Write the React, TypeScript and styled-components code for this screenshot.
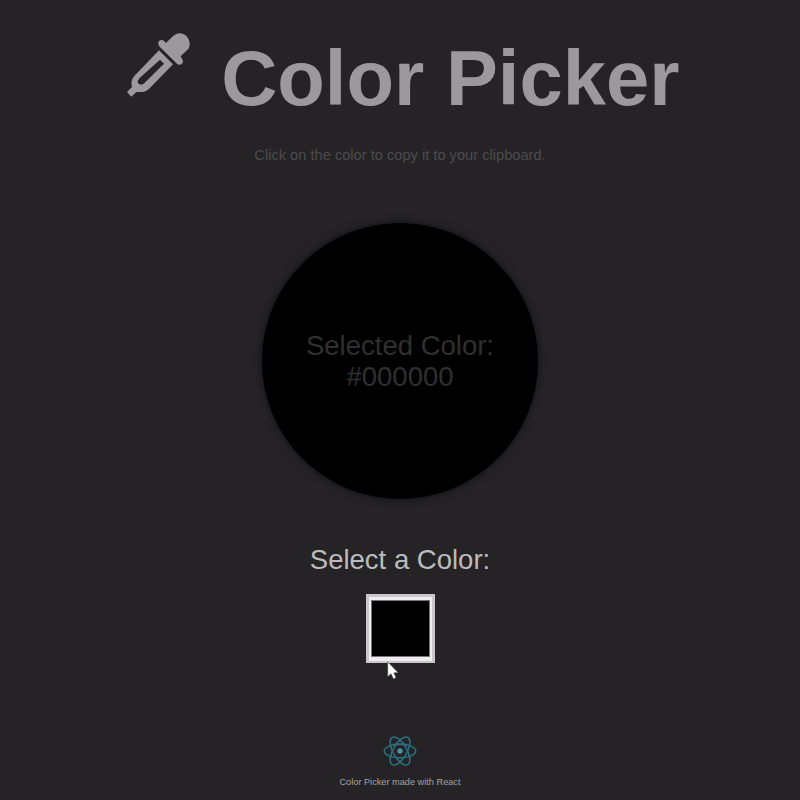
import React, { useState } from "react";
import styled, { createGlobalStyle } from "styled-components";

const GlobalStyle = createGlobalStyle`
  *, *::before, *::after { box-sizing: border-box; }
  body {
    margin: 0;
    background: #252326;
    font-family: "Liberation Sans", Arial, sans-serif;
  }
`;

const Page = styled.main`
  display: flex;
  flex-direction: column;
  align-items: center;
  height: 800px;
  overflow: hidden;
  background: #252326;
`;

const Header = styled.header`
  display: flex;
  align-items: flex-start;
  width: 556px;
  height: 90px;
  margin-top: 32px;
  margin-left: 6px;
`;

const DropperIcon = styled.svg`
  flex: none;
  width: 66.67px;
  height: 66.67px;
  margin-right: 29.5px;
  fill: #9b999c;
`;

const Title = styled.h1`
  margin: 1px 0 0;
  font-size: 77.8px;
  line-height: 90px;
  font-weight: 700;
  white-space: nowrap;
  color: #9b999c;
`;

const Hint = styled.p`
  margin: 25px 0 0;
  font-size: 14.65px;
  line-height: 17px;
  color: #4d4c4d;
`;

const Swatch = styled.button<{ $color: string }>`
  display: flex;
  align-items: center;
  justify-content: center;
  width: 276px;
  height: 276px;
  margin-top: 59px;
  padding: 0;
  border: 0;
  border-radius: 50%;
  background: ${(p) => p.$color};
  box-shadow: 0 0 9px rgba(0, 0, 0, 0.6);
  font: 27.5px/31px "Liberation Sans", Arial, sans-serif;
  color: #303030;
`;

const Label = styled.label`
  margin-top: 45px;
  font-size: 27.5px;
  line-height: 32px;
  color: #bdbcbd;
`;

const PickerSlot = styled.div`
  position: relative;
  width: 69px;
  height: 69px;
  margin-top: 18px;
`;

const Picker = styled.button`
  display: block;
  width: 69px;
  height: 69px;
  padding: 3px 2px 4px;
  border: 3px solid #c9c7ca;
  border-bottom-width: 2px;
  border-radius: 0;
  background: #efedef;
`;

const PickerFill = styled.span<{ $color: string }>`
  display: block;
  height: 100%;
  border: 1px solid #77757a;
  background: ${(p) => p.$color};
`;

const Cursor = styled.svg`
  position: absolute;
  left: 21px;
  top: 67px;
  width: 12px;
  height: 19px;
`;

const Footer = styled.footer`
  display: flex;
  flex-direction: column;
  align-items: center;
  margin-top: 69.5px;
  font-size: 9.2px;
  line-height: 11px;
  color: #a4a2a5;
`;

const ReactLogo = styled.svg`
  width: 36px;
  height: 36px;
  margin-bottom: 8px;
  fill: none;
  stroke: #2b6f80;
`;

export default function App() {
  const [color] = useState("#000000");
  return (
    <Page>
      <GlobalStyle />
      <Header>
        <DropperIcon viewBox="45 35 200 200" aria-hidden="true">
          <path
            fillRule="evenodd"
            d="M147 90 L189 132 L119 204 Q108 216 93 215 L79 215 L64 229 L51 215 L66 200 L64 188 Q64 176 73 167 Z M150 118 L88 174 Q81 182 84 188 Q89 196 101 190 L162 130 Z"
          />
          <path d="M148 61 Q157 56 163 63 L168 68 L190 46 Q208 33 226 44 Q243 59 238 79 Q236 86 231 90 L212 108 L216 115 Q222 123 216 130 Q209 136 201 130 L149 79 Q141 69 148 61 Z" />
        </DropperIcon>
        <Title>Color Picker</Title>
      </Header>
      <Hint>Click on the color to copy it to your clipboard.</Hint>
      <Swatch $color={color}>
        <span>
          Selected Color:
          <br />
          {color}
        </span>
      </Swatch>
      <Label htmlFor="picker">Select a Color:</Label>
      <PickerSlot>
        <Picker id="picker" aria-label="Choose color">
          <PickerFill $color={color} />
        </Picker>
        <Cursor viewBox="0 0 12 19" aria-hidden="true">
          <path
            d="M.7 .8 V15.8 L4 12.8 L6.4 18 L9 16.8 L6.9 11.8 H11.3 Z"
            fill="#fff"
            stroke="#333"
            strokeWidth=".5"
          />
        </Cursor>
      </PickerSlot>
      <Footer>
        <ReactLogo viewBox="-18 -18 36 36" aria-hidden="true">
          <ellipse rx="15.7" ry="6.9" strokeWidth="1.6" />
          <ellipse rx="15.7" ry="6.9" strokeWidth="1.6" transform="rotate(60)" />
          <ellipse rx="15.7" ry="6.9" strokeWidth="1.6" transform="rotate(120)" />
          <circle r="2.7" fill="#4a93a5" stroke="none" />
        </ReactLogo>
        Color Picker made with React
      </Footer>
    </Page>
  );
}
